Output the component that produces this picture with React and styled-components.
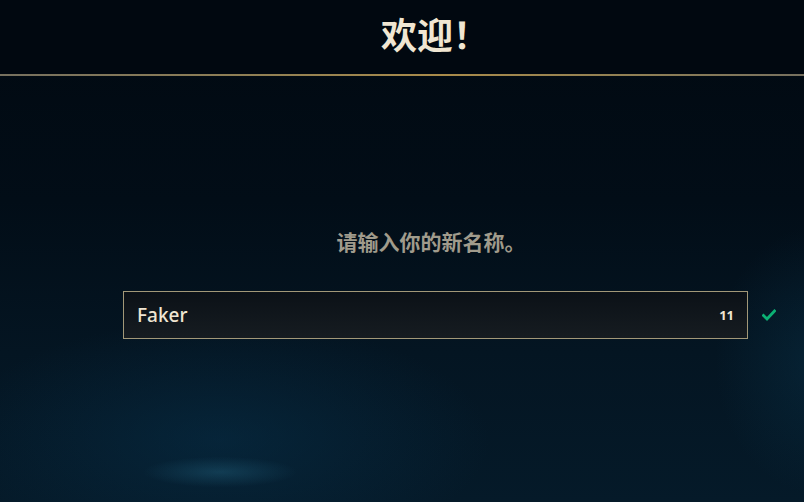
import styled, { createGlobalStyle } from "styled-components";

const GlobalStyle = createGlobalStyle`
  html, body {
    margin: 0;
    padding: 0;
    background: #010a13;
  }
  * { box-sizing: border-box; }
`;

const App = () => {
  return (
    <Page>
      <GlobalStyle />
      <Header>
        <Title>欢迎！</Title>
      </Header>
      <Divider />
      <Main>
        <Prompt>请输入你的新名称。</Prompt>
        <FieldRow>
          <Field>
            <NameInput defaultValue="Faker" spellCheck={false} />
            <Counter>11</Counter>
          </Field>
          <Check viewBox="0 0 14 12">
            <path d="M1.5 6.5 L5 10 L12.5 2" fill="none" stroke="#0bb174" strokeWidth="2.8" strokeLinecap="square" />
          </Check>
        </FieldRow>
      </Main>
    </Page>
  );
};

const Page = styled.div`
  width: 804px;
  height: 502px;
  overflow: hidden;
  display: flex;
  flex-direction: column;
  background:
    radial-gradient(ellipse 110px 22px at 220px 472px, rgba(40, 110, 140, 0.35), rgba(40, 110, 140, 0) 70%),
    radial-gradient(ellipse 360px 160px at 220px 440px, rgba(8, 52, 80, 0.45), rgba(8, 52, 80, 0) 75%),
    radial-gradient(ellipse 140px 180px at 820px 360px, rgba(12, 66, 94, 0.3), rgba(12, 66, 94, 0) 75%),
    linear-gradient(180deg, #010911 0%, #020d17 40%, #041522 70%, #051a29 100%);
`;

const Header = styled.header`
  height: 74px;
  display: flex;
  align-items: center;
  justify-content: center;
  padding: 0 0 8px 66px;
  background: #010810;
`;

const Title = styled.h1`
  margin: 0;
  font-family: "Noto Sans CJK SC", "Noto Sans", sans-serif;
  font-size: 36px;
  font-weight: 700;
  color: #f0e6d2;
`;

const Divider = styled.div`
  height: 2px;
  background: linear-gradient(90deg, #76705f 0%, #8f7f55 30%, #a98b4a 55%, #8f7f55 80%, #76705f 100%);
`;

const Main = styled.main`
  flex: 1;
  display: flex;
  flex-direction: column;
  padding-top: 151px;
`;

const Prompt = styled.p`
  margin: 0;
  padding-left: 58px;
  text-align: center;
  font-family: "Noto Sans CJK SC", "Noto Sans", sans-serif;
  font-size: 21px;
  font-weight: 700;
  line-height: 28px;
  color: #a09b8c;
`;

const FieldRow = styled.div`
  display: flex;
  align-items: center;
  margin-top: 36px;
  padding-left: 123px;
`;

const Field = styled.div`
  width: 625px;
  height: 48px;
  display: flex;
  align-items: center;
  padding: 0 13px;
  border: 1px solid #a29878;
  background: linear-gradient(180deg, #0b1117 0%, #161c21 100%);
`;

const NameInput = styled.input`
  flex: 1;
  min-width: 0;
  border: none;
  outline: none;
  background: transparent;
  font-family: "Noto Sans", sans-serif;
  font-size: 19px;
  font-weight: 500;
  color: #f0e6d2;
  padding: 0;
`;

const Counter = styled.span`
  font-family: "Noto Sans", sans-serif;
  font-size: 13px;
  font-weight: 700;
  color: #f0e6d2;
`;

const Check = styled.svg`
  width: 14px;
  height: 12px;
  margin-left: 14px;
`;

export default App;
